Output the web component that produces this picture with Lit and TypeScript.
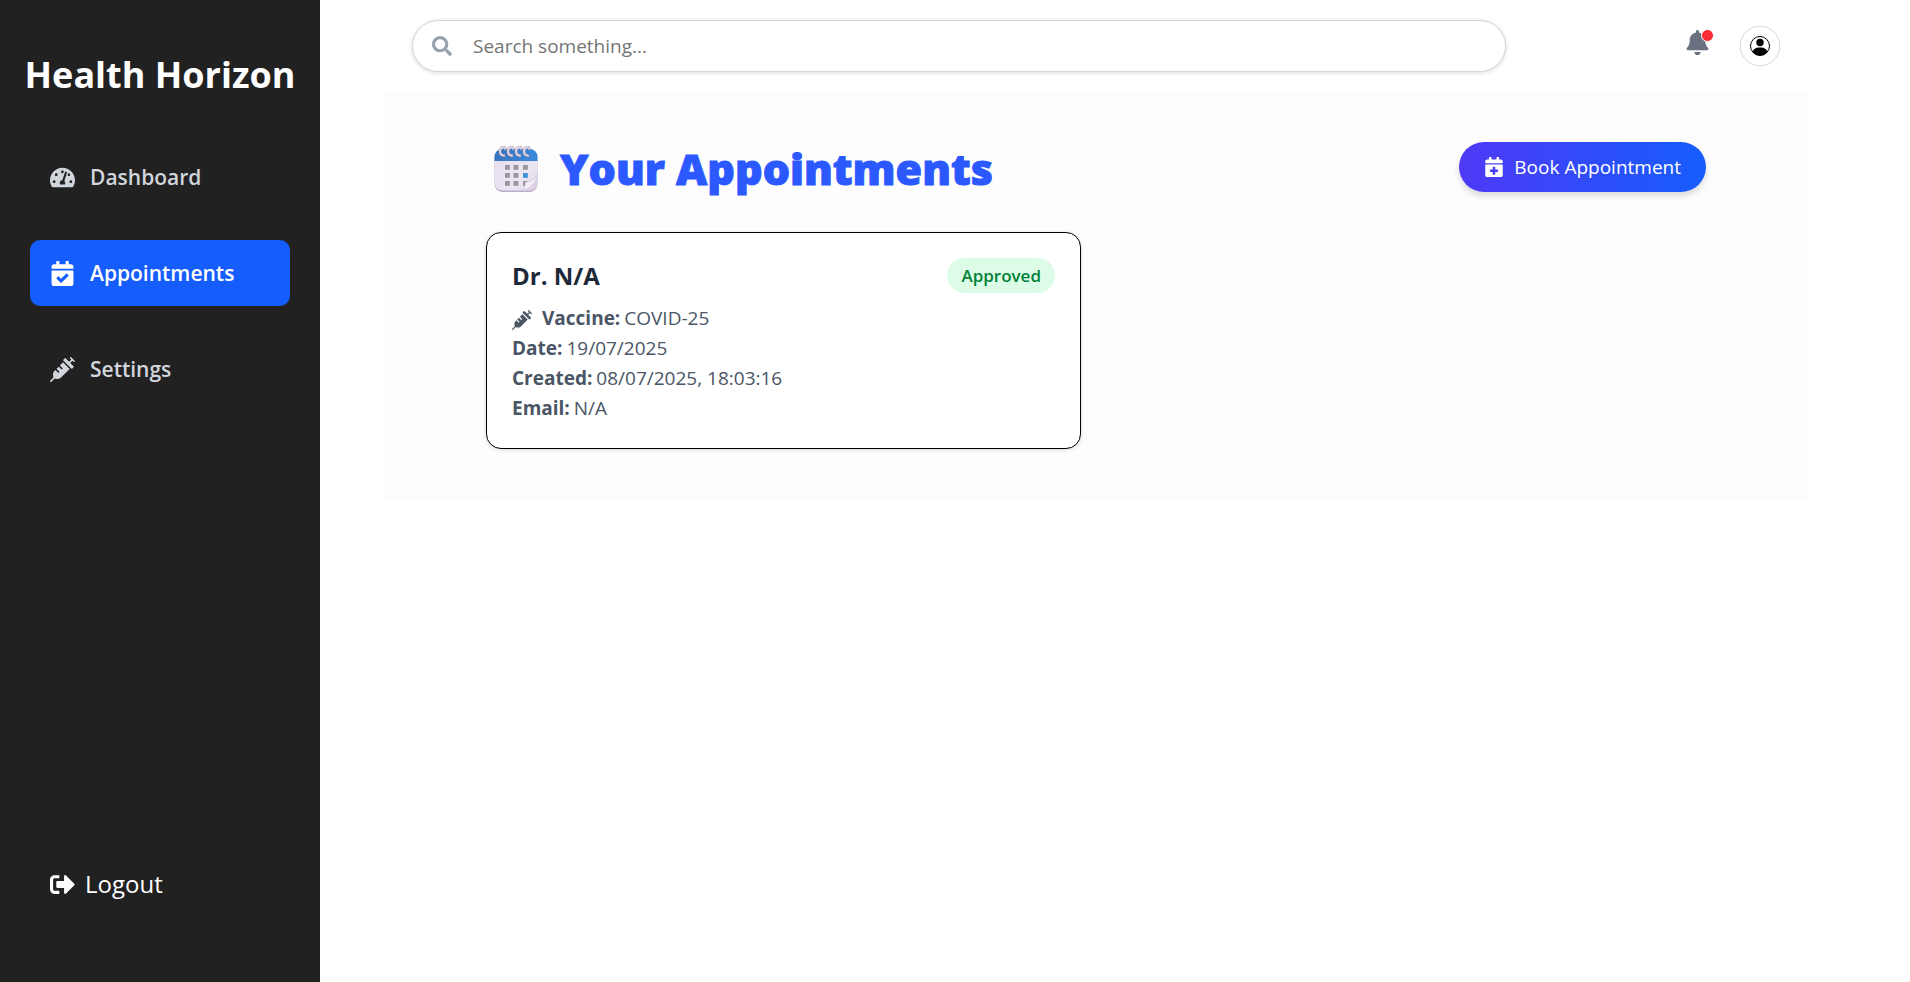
import { LitElement, html, css, svg } from "lit";
import { customElement } from "lit/decorators.js";
import { classMap } from "lit/directives/class-map.js";

const CALENDAR_BASE =
  "M436 160H12c-6.627 0-12-5.373-12-12v-36c0-26.51 21.49-48 48-48h48V12c0-6.627 5.373-12 12-12h40c6.627 0 12 5.373 12 12v52h128V12c0-6.627 5.373-12 12-12h40c6.627 0 12 5.373 12 12v52h48c26.51 0 48 21.49 48 48v36c0 6.627-5.373 12-12 12zM12 192h424c6.627 0 12 5.373 12 12v260c0 26.51-21.49 48-48 48H48c-26.51 0-48-21.49-48-48V204c0-6.627 5.373-12 12-12z";

const ICONS: Record<string, { box: string; d: string }> = {
  gauge: {
    box: "0 0 576 512",
    d: "M288 32C128.94 32 0 160.94 0 320c0 52.8 14.25 102.26 39.06 144.8 5.61 9.62 16.3 15.2 27.44 15.2h443c11.14 0 21.83-5.58 27.44-15.2C561.75 422.26 576 372.8 576 320c0-159.06-128.94-288-288-288zm0 64c14.71 0 26.58 10.13 30.32 23.65-1.11 2.26-2.64 4.23-3.45 6.67l-9.22 27.67c-5.13 3.49-10.97 6.01-17.64 6.01-17.67 0-32-14.33-32-32S270.33 96 288 96zM96 384c-17.67 0-32-14.33-32-32s14.33-32 32-32 32 14.33 32 32-14.33 32-32 32zm48-160c-17.67 0-32-14.33-32-32s14.33-32 32-32 32 14.33 32 32-14.33 32-32 32zm246.77-72.41l-61.33 184C343.13 347.33 352 364.54 352 384c0 11.72-3.38 22.55-8.88 32H232.88c-5.5-9.45-8.88-20.28-8.88-32 0-33.94 26.5-61.43 59.9-63.59l61.34-184.01c4.17-12.56 17.73-19.45 30.36-15.17 12.57 4.19 19.35 17.79 15.17 30.36zm14.66 57.2l15.52-46.55c3.47-1.29 7.13-2.23 11.05-2.23 17.67 0 32 14.33 32 32s-14.33 32-32 32c-11.38-.01-20.89-6.28-26.57-15.22zM480 384c-17.67 0-32-14.33-32-32s14.33-32 32-32 32 14.33 32 32-14.33 32-32 32z",
  },
  calendarCheck: {
    box: "0 0 448 512",
    d: CALENDAR_BASE + "m333.296 95.947l-28.169-28.398c-4.667-4.705-12.265-4.736-16.97-.068L194.12 364.665l-45.98-46.352c-4.667-4.705-12.266-4.736-16.971-.068l-28.397 28.17c-4.705 4.667-4.736 12.265-.068 16.97l82.601 83.269c4.667 4.705 12.265 4.736 16.97.068l142.953-141.805c4.705-4.667 4.736-12.265.068-16.97z",
  },
  calendarPlus: {
    box: "0 0 448 512",
    d: CALENDAR_BASE + "m316 140c0-6.6-5.4-12-12-12h-60v-60c0-6.6-5.4-12-12-12h-40c-6.6 0-12 5.4-12 12v60h-60c-6.6 0-12 5.4-12 12v40c0 6.6 5.4 12 12 12h60v60c0 6.6 5.4 12 12 12h40c6.6 0 12-5.4 12-12v-60h60c6.6 0 12-5.4 12-12v-40z",
  },
  syringe: {
    box: "0 0 512 512",
    d: "M201.5 174.8l55.7 55.8c3.1 3.1 3.1 8.2 0 11.3l-11.3 11.3c-3.1 3.1-8.2 3.1-11.3 0l-55.7-55.8-45.3 45.3 55.8 55.8c3.1 3.1 3.1 8.2 0 11.3l-11.3 11.3c-3.1 3.1-8.2 3.1-11.3 0L111 265.2l-26.4 26.4c-17.3 17.3-25.6 41.1-23 65.4l7.1 63.6L2.3 487c-3.1 3.1-3.1 8.2 0 11.3l11.3 11.3c3.1 3.1 8.2 3.1 11.3 0l66.3-66.3 63.6 7.1c23.9 2.6 47.9-5.4 65.4-23l181.9-181.9-135.7-135.7-64.9 65zm308.2-93.3L430.5 2.3c-3.1-3.1-8.2-3.1-11.3 0l-11.3 11.3c-3.1 3.1-3.1 8.2 0 11.3l28.3 28.3-45.3 45.3-56.6-56.6-17-17c-3.1-3.1-8.2-3.1-11.3 0l-33.9 33.9c-3.1 3.1-3.1 8.2 0 11.3l17 17L424.8 223l17 17c3.1 3.1 8.2 3.1 11.3 0l33.9-34c3.1-3.1 3.1-8.2 0-11.3l-73.5-73.5 45.3-45.3 28.3 28.3c3.1 3.1 8.2 3.1 11.3 0l11.3-11.3c3.1-3.2 3.1-8.2 0-11.4z",
  },
  logout: {
    box: "0 0 512 512",
    d: "M497 273L329 441c-15 15-41 4.5-41-17v-96H152c-13.3 0-24-10.7-24-24v-96c0-13.3 10.7-24 24-24h136V88c0-21.4 25.9-32 41-17l168 168c9.3 9.4 9.3 24.6 0 34zM192 436v-40c0-6.6-5.4-12-12-12H96c-17.7 0-32-14.3-32-32V160c0-17.7 14.3-32 32-32h84c6.6 0 12-5.4 12-12V76c0-6.6-5.4-12-12-12H96c-53 0-96 43-96 96v192c0 53 43 96 96 96h84c6.6 0 12-5.4 12-12z",
  },
  search: {
    box: "0 0 512 512",
    d: "M505 442.7L405.3 343c-4.5-4.5-10.6-7-17-7H372c27.6-35.3 44-79.7 44-128C416 93.1 322.9 0 208 0S0 93.1 0 208s93.1 208 208 208c48.3 0 92.7-16.4 128-44v16.3c0 6.4 2.5 12.5 7 17l99.7 99.7c9.4 9.4 24.6 9.4 33.9 0l28.3-28.3c9.4-9.4 9.4-24.6.1-34zM208 336c-70.7 0-128-57.2-128-128 0-70.7 57.2-128 128-128 70.7 0 128 57.2 128 128 0 70.7-57.2 128-128 128z",
  },
  bell: {
    box: "0 0 448 512",
    d: "M224 512c35.32 0 63.97-28.65 63.97-64H160.03c0 35.35 28.65 64 63.97 64zm215.39-149.71c-19.32-20.76-55.47-51.99-55.47-154.29 0-77.7-54.48-139.9-127.94-155.16V32c0-17.67-14.32-32-31.98-32s-31.98 14.33-31.98 32v20.84C118.56 68.1 64.08 130.3 64.08 208c0 102.3-36.15 133.53-55.47 154.29-6 6.45-8.66 14.16-8.61 21.71.11 16.4 12.98 32 32.1 32h383.8c19.12 0 32-15.6 32.1-32 .05-7.55-2.61-15.27-8.61-21.71z",
  },
};

const icon = (name: string) => html`
  <svg class="icon ${name}" viewBox=${ICONS[name].box} aria-hidden="true">
    <path d=${ICONS[name].d}></path>
  </svg>
`;

const NAV = [
  { label: "Dashboard", icon: "gauge", active: false },
  { label: "Appointments", icon: "calendarCheck", active: true },
  { label: "Settings", icon: "syringe", active: false },
];

const APPOINTMENTS = [
  {
    doctor: "Dr. N/A",
    status: "Approved",
    vaccine: "COVID-25",
    date: "19/07/2025",
    created: "08/07/2025, 18:03:16",
    email: "N/A",
  },
];

const RING = "M6.2 2.6C5.2 0.4 1.2 1 1 5C0.9 7.6 2.4 9.4 5 9.6";

const calendarArt = html`
  <svg class="calendar-art" viewBox="0 0 44 46" aria-hidden="true">
    <defs>
      <linearGradient id="page" x1="0" y1="0" x2="1" y2="1">
        <stop offset="0" stop-color="#e6dfee"></stop>
        <stop offset="0.7" stop-color="#ebe4f1"></stop>
        <stop offset="1" stop-color="#dacfe3"></stop>
      </linearGradient>
      <linearGradient id="top" x1="0" y1="0" x2="1" y2="0">
        <stop offset="0" stop-color="#3a73bd"></stop>
        <stop offset="1" stop-color="#3a8bdc"></stop>
      </linearGradient>
    </defs>
    <rect x="0.5" y="3" width="43" height="43" rx="8" fill="#bcadc9"></rect>
    <rect x="0.5" y="3" width="43" height="41.5" rx="8" fill="url(#page)"></rect>
    <path d="M0.5 15V11a8 8 0 0 1 8-8h27a8 8 0 0 1 8 8v4z" fill="url(#top)"></path>
    ${[5, 13, 21, 29].map(
      (x) => svg`
        <g transform="translate(${x} 0)" fill="none" stroke-linecap="round">
          <path d=${RING} stroke="#8f86a6" stroke-width="2.8"></path>
          <path d=${RING} stroke="#e2dae8" stroke-width="1.9"></path>
        </g>`,
    )}
    ${[19, 27, 35].map((y, row) =>
      [11, 19.5, 29].map(
        (x, col) => svg`<rect x=${x} y=${y} width="4.8" height="4.8" fill=${row === 1 && col === 2 ? "#3b93d6" : "#9a959c"}></rect>`,
      ),
    )}
    <path d="M43.5 29c-3 5-7 7-12 7 0 4-1 7-3 8.5h7a8 8 0 0 0 8-8z" fill="#dcd2e4"></path>
    <path d="M43.5 29c-3 5-7 7-12 7 0 4-1 7-3 8.5 7-1 13-7 15-15.5z" fill="#f3eef6" stroke="#cbbfd5" stroke-width="0.5"></path>
  </svg>
`;

@customElement("app-root")
export class AppRoot extends LitElement {
  static styles = css`
    :host {
      display: block;
      min-height: 100vh;
      background: #fff;
      font-family: "Open Sans", "Noto Sans", sans-serif;
      font-size: 19px;
      line-height: 30px;
    }
    * {
      box-sizing: border-box;
    }
    h1,
    h2,
    h3,
    ul,
    dl,
    dd {
      margin: 0;
      padding: 0;
    }
    button {
      border: 0;
      padding: 0;
      background: none;
      font: inherit;
      color: inherit;
      cursor: pointer;
    }
    .icon {
      display: block;
      flex: none;
      width: 20px;
      height: 20px;
      fill: currentColor;
    }
    .shell {
      display: flex;
      min-height: 100vh;
    }
    .sidebar {
      display: flex;
      flex-direction: column;
      flex: none;
      width: 320px;
      padding: 50px 30px 70px;
      background: #212121;
      color: #fff;
    }
    .brand {
      margin: 0 -20px 44px;
      font-size: 36px;
      line-height: 50px;
      font-weight: 700;
      text-align: center;
      white-space: nowrap;
    }
    .nav {
      display: flex;
      flex-direction: column;
      gap: 30px;
      list-style: none;
    }
    .nav-link {
      display: flex;
      align-items: center;
      gap: 15px;
      padding: 15px 20px;
      border-radius: 10px;
      color: #d1d5dc;
      font-size: 21px;
      line-height: 36px;
      font-weight: 600;
      text-decoration: none;
    }
    .nav-link.active {
      background: #155dfc;
      color: #fff;
    }
    .nav-link .icon,
    .logout-button .icon {
      width: 25px;
      height: 25px;
    }
    .logout-button {
      display: flex;
      align-items: center;
      gap: 10px;
      margin-top: auto;
      padding: 10px 20px;
      font-size: 24px;
      line-height: 36px;
    }
    .main {
      flex: 1;
      min-width: 0;
      padding: 0 100px 0 62px;
    }
    .topbar {
      display: flex;
      align-items: center;
      justify-content: space-between;
      padding: 20px 30px;
    }
    .search-box {
      display: flex;
      align-items: center;
      gap: 21px;
      width: 80%;
      height: 52px;
      padding: 0 19px;
      border: 1px solid #d1d5dc;
      border-radius: 26px;
      background: #fff;
      color: #99a1af;
      box-shadow: 0 1px 4px rgba(0, 0, 0, 0.14);
    }
    .search-input {
      flex: 1;
      min-width: 0;
      border: 0;
      padding: 0;
      outline: 0;
      background: transparent;
      font: inherit;
      color: #1e2939;
    }
    .search-input::placeholder {
      color: #757575;
    }
    .actions {
      display: flex;
      align-items: center;
      gap: 30px;
    }
    .bell-button {
      position: relative;
      padding-bottom: 8px;
      color: #6a7282;
    }
    .bell-button .icon {
      width: 25px;
      height: 25px;
    }
    .dot {
      position: absolute;
      top: -1px;
      right: -4px;
      width: 13px;
      height: 13px;
      border: 1px solid #fff;
      border-radius: 50%;
      background: #fb2c36;
    }
    .avatar-art {
      display: block;
      width: 40px;
      height: 40px;
    }
    .panel {
      padding: 50px 30px;
      background: #fdfdfd;
    }
    .content {
      max-width: 1220px;
      margin: 0 auto;
    }
    .content-head {
      display: flex;
      align-items: center;
      justify-content: space-between;
      margin-bottom: 38px;
    }
    .title {
      display: flex;
      align-items: center;
      gap: 22px;
      padding: 2px 0 0 8px;
      color: #2b59ff;
      font-size: 43px;
      line-height: 50px;
      font-weight: 800;
      -webkit-text-stroke: 1px currentColor;
    }
    .calendar-art {
      width: 44px;
      height: 46px;
    }
    .book-button {
      display: flex;
      align-items: center;
      align-self: flex-start;
      gap: 10px;
      padding: 10px 25px;
      border-radius: 25px;
      background: linear-gradient(90deg, #4f39f6, #155dfc);
      color: #fff;
      box-shadow: 0 4px 6px rgba(0, 0, 0, 0.14);
    }
    .cards {
      display: grid;
      grid-template-columns: 1fr 1fr;
      gap: 30px;
    }
    .card {
      padding: 25px;
      border: 1px solid #000;
      border-radius: 15px;
      background: #fff;
      box-shadow: 0 1px 4px rgba(0, 0, 0, 0.14);
    }
    .card-head {
      display: flex;
      align-items: center;
      justify-content: space-between;
      margin-bottom: 10px;
    }
    .doctor {
      color: #1e2939;
      font-size: 24px;
      line-height: 35px;
      font-weight: 700;
    }
    .status {
      padding: 5px 14px;
      border-radius: 18px;
      background: #dcfce7;
      color: #008236;
      font-size: 17px;
      line-height: 25px;
      font-weight: 600;
    }
    .facts {
      color: #4a5565;
    }
    .fact {
      display: flex;
      align-items: center;
      gap: 4px;
    }
    .fact .icon {
      height: 24px;
      margin-right: 6px;
      padding-top: 4px;
    }
    dt {
      font-weight: 700;
    }
  `;

  render() {
    return html`
      <div class="shell">
        <aside class="sidebar">
          <h1 class="brand">Health Horizon</h1>
          <nav>
            <ul class="nav">
              ${NAV.map(
                (item) => html`
                  <li>
                    <a class=${classMap({ "nav-link": true, active: item.active })} href="#">
                      ${icon(item.icon)}<span>${item.label}</span>
                    </a>
                  </li>
                `,
              )}
            </ul>
          </nav>
          <button class="logout-button" type="button">${icon("logout")}<span>Logout</span></button>
        </aside>
        <div class="main">
          <header class="topbar">
            <label class="search-box">
              ${icon("search")}
              <input class="search-input" type="text" placeholder="Search something..." aria-label="Search" />
            </label>
            <div class="actions">
              <button class="bell-button" type="button" aria-label="Notifications">
                ${icon("bell")}<span class="dot"></span>
              </button>
              <button type="button" aria-label="Profile">
                <svg class="avatar-art" viewBox="0 0 40 40" aria-hidden="true">
                  <circle cx="20" cy="20" r="19.8" fill="#fff" stroke="#777" stroke-width="0.3"></circle>
                  <clipPath id="face"><circle cx="20" cy="20" r="9.5"></circle></clipPath>
                  <circle cx="20" cy="20" r="9.5" fill="none" stroke="#000"></circle>
                  <circle cx="20" cy="16.5" r="3.7"></circle>
                  <path clip-path="url(#face)" d="M12.5 30v-3c0-3.5 3-5.5 7.5-5.5s7.5 2 7.5 5.5v3z"></path>
                </svg>
              </button>
            </div>
          </header>
          <main class="panel">
            <div class="content">
              <div class="content-head">
                <h2 class="title">${calendarArt}<span>Your Appointments</span></h2>
                <button class="book-button" type="button">
                  ${icon("calendarPlus")}<span>Book Appointment</span>
                </button>
              </div>
              <div class="cards">
                ${APPOINTMENTS.map(
                  (a) => html`
                    <article class="card">
                      <div class="card-head">
                        <h3 class="doctor">${a.doctor}</h3>
                        <span class="status">${a.status}</span>
                      </div>
                      <dl class="facts">
                        <div class="fact">${icon("syringe")}<dt>Vaccine:</dt><dd>${a.vaccine}</dd></div>
                        <div class="fact"><dt>Date:</dt><dd>${a.date}</dd></div>
                        <div class="fact"><dt>Created:</dt><dd>${a.created}</dd></div>
                        <div class="fact"><dt>Email:</dt><dd>${a.email}</dd></div>
                      </dl>
                    </article>
                  `,
                )}
              </div>
            </div>
          </main>
        </div>
      </div>
    `;
  }
}
